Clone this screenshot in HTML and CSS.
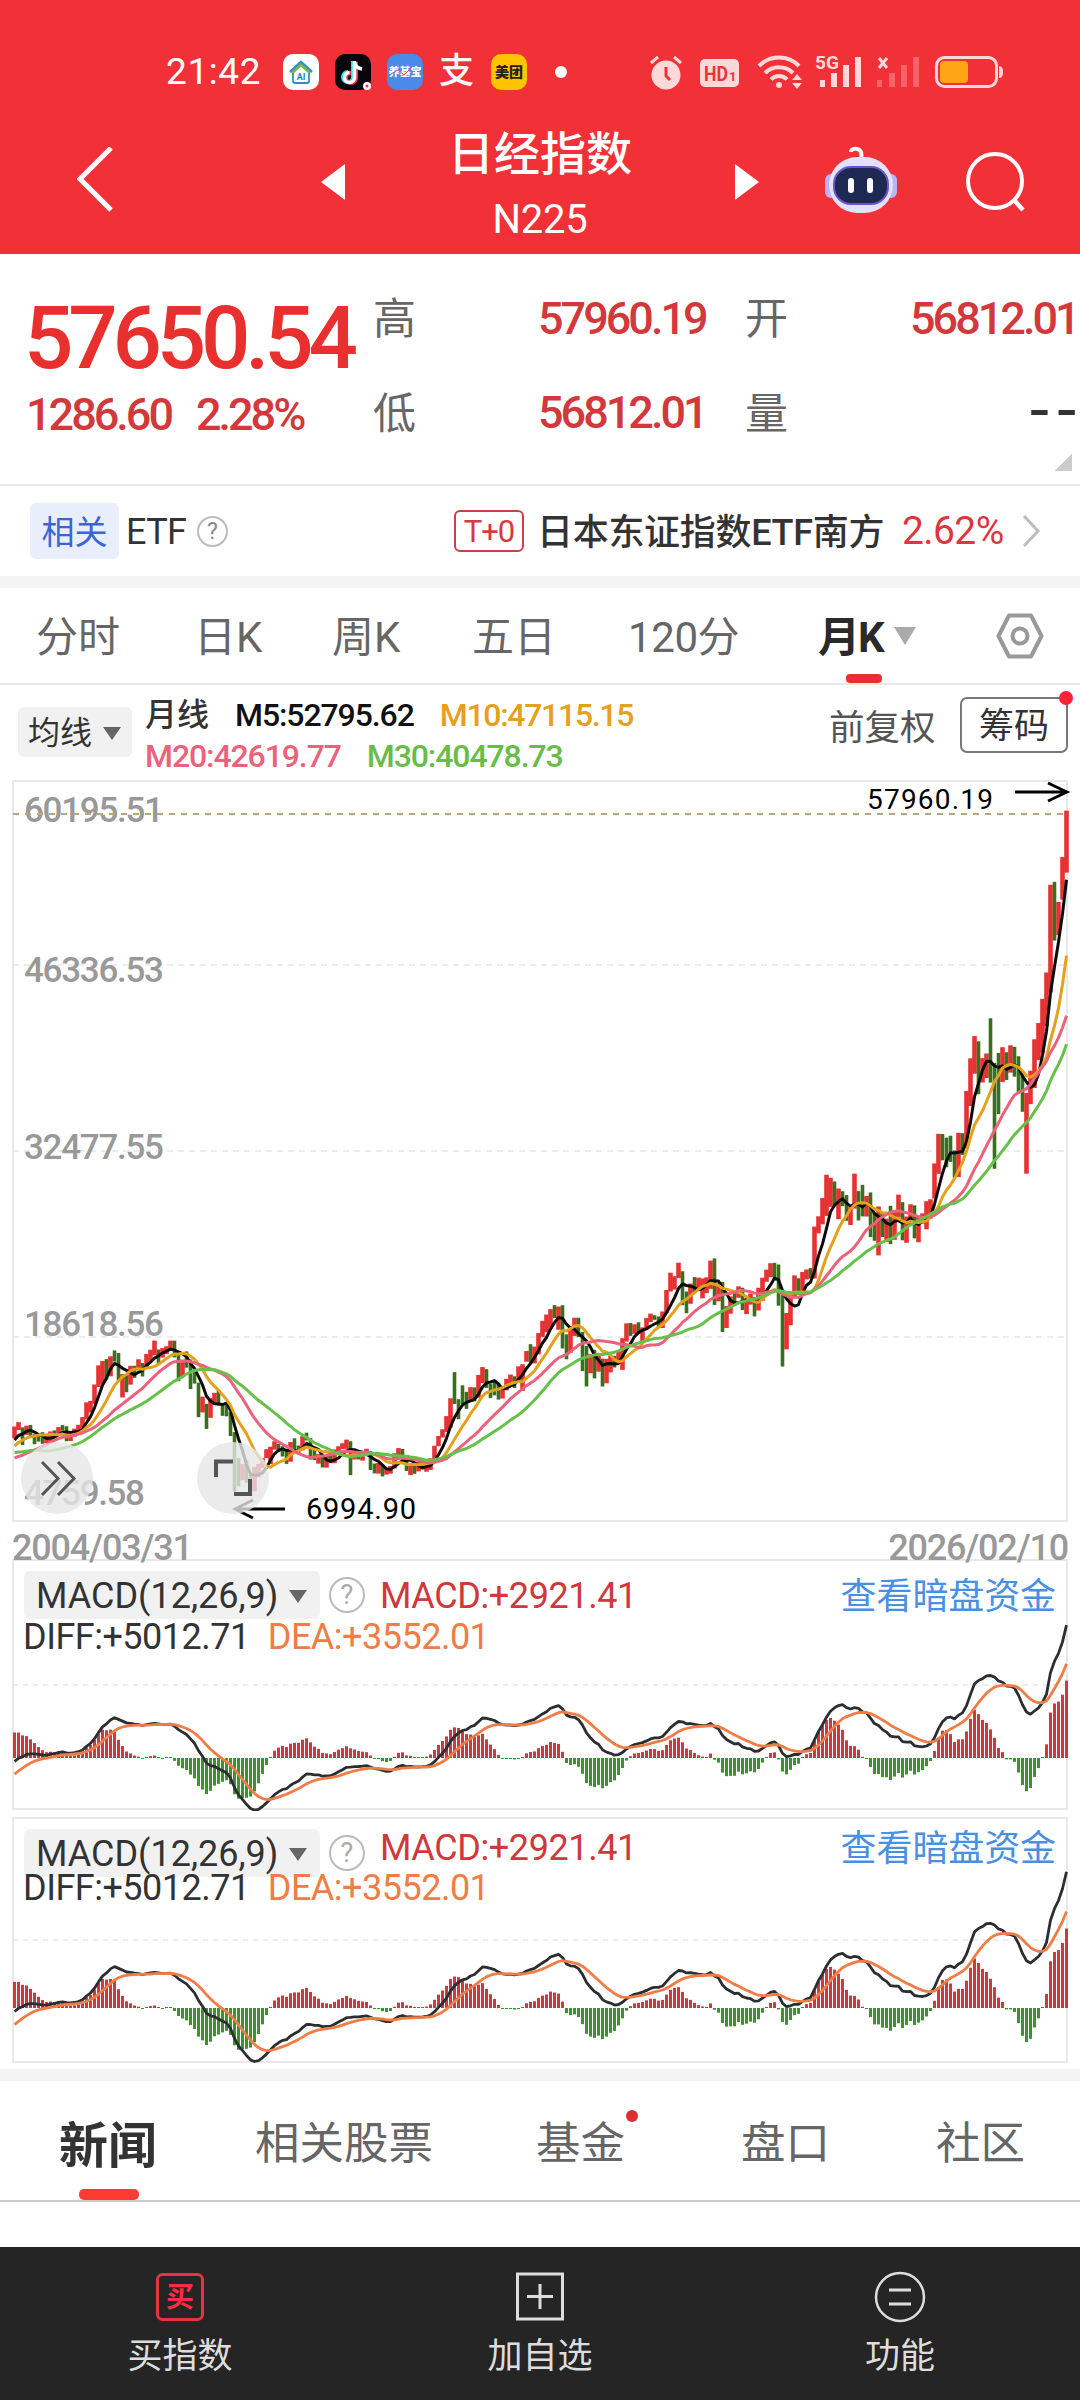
FILE: index.html
```html
<!DOCTYPE html>
<html lang="zh-CN">
<head>
    <meta charset="UTF-8">
    <meta name="viewport" content="width=device-width, initial-scale=1.0">
    <title>日经指数 N225</title>
    <link rel="stylesheet" href="styles.css">
</head>
<body>
    <header class="top">
        <div class="status">
            <span class="time">21:42</span>
            <svg class="app" viewBox="0 0 36 36"><rect width="36" height="36" rx="10" fill="#fff"/><path d="M7 18L18 8l11 10" fill="none" stroke="#2a8fd0" stroke-width="2.5"/><path d="M9 19l9-8 9 8" fill="none" stroke="#7ab648" stroke-width="2.5"/><path d="M10 19v8q0 2 2 2h12q2 0 2-2v-8" fill="none" stroke="#2a8fd0" stroke-width="1.8"/><text x="18" y="26" font-size="9" font-weight="700" text-anchor="middle" fill="#1d87b8">AI</text></svg>
            <svg class="app" viewBox="0 0 36 36"><rect width="36" height="36" rx="10" fill="#08060c"/><path d="M18 7v16a5 5 0 1 1-5-5" fill="none" stroke="#25e6e0" stroke-width="4"/><path d="M21 8v16a5 5 0 1 1-5-5" fill="none" stroke="#fb2c55" stroke-width="4"/><path d="M19.500 7v16.500a5 5 0 1 1-5-5M19.500 8q1 6 7.500 7" fill="none" stroke="#fff" stroke-width="3.600"/><circle cx="32" cy="32" r="4" fill="#fff"/><circle cx="32" cy="32" r="1.500" fill="#f13037"/></svg>
            <svg class="app" viewBox="0 0 36 36"><rect width="36" height="36" rx="10" fill="#4a8bea"/><text x="18" y="22" font-size="11" font-weight="900" text-anchor="middle" fill="#fff">养基宝</text><path d="M4 20l7-4 6 5 8-8" fill="none" stroke="#e34d63" stroke-width="1"/></svg>
            <span class="zhi">支</span>
            <svg class="app" viewBox="0 0 36 36"><rect width="36" height="36" rx="10" fill="#ffc300"/><text x="18" y="23" font-size="14" font-weight="900" text-anchor="middle" fill="#222">美团</text></svg>
            <i class="more"></i>
            <svg class="sys" viewBox="0 0 356 36" width="356" height="36">
                <g fill="#ffd9d9">
                    <circle cx="16" cy="21" r="14.500"/>
                    <path d="M1 9l7-6M31 9l-7-6" stroke="#ffd9d9" stroke-width="3"/>
                    <path d="M16 13v9l4 4" fill="none" stroke="#f13037" stroke-width="3"/>
                    <rect x="50" y="5" width="39" height="28" rx="5"/>
                    <text x="54" y="27" font-size="21" font-weight="700" textLength="24" lengthAdjust="spacingAndGlyphs" fill="#f13037">HD</text>
                    <text x="79" y="27" font-size="13" font-weight="700" fill="#f13037">1</text>
                    <path d="M109 12a28 28 0 0 1 40 0M115 19a20 20 0 0 1 28 0M121 25.500a11 11 0 0 1 16 0" fill="none" stroke="#ffd9d9" stroke-width="4"/>
                    <circle cx="129" cy="31" r="3"/>
                    <path d="M142 26l5-6 5 6zM142 29l5 6 5-6z"/>
                    <text x="165" y="15" font-size="19" font-weight="700" textLength="24" lengthAdjust="spacingAndGlyphs">5G</text>
                    <path d="M170 26h5v7h-5zM181 19h6v14h-6zM193 11h6v22h-6zM205 3h6v30h-6z"/>
                    <path d="M229 4l8 10m0-10l-8 10" stroke="#ffd9d9" stroke-width="3"/>
                    <path d="M227 26h5v7h-5zM239 19h6v14h-6zM251 11h6v22h-6zM263 3h6v30h-6z" opacity=".3"/>
                    <rect x="286.500" y="3.500" width="60" height="29" rx="8" fill="none" stroke="#ffd9d9" stroke-width="3"/>
                    <path d="M349 12q4 0 4 6t-4 6z"/>
                    <rect x="290" y="7" width="28" height="22" rx="4" fill="#ffa516"/>
                </g>
            </svg>
        </div>
        <nav class="titlebar">
            <svg class="back" width="36" height="66" viewBox="0 0 36 66"><path d="M34 1L3 32l31 31" fill="none" stroke="#fff" stroke-width="5"/></svg>
            <i class="prev"></i>
            <div class="title">
                <h1>日经指数</h1>
                <p>N225</p>
            </div>
            <i class="next"></i>
            <svg class="robot" width="74" height="68" viewBox="0 0 74 68">
                <path d="M37 13q2-9-4-10-6-1-6 3" fill="none" stroke="#fff" stroke-width="4"/>
                <rect x="1" y="28" width="12" height="24" rx="6" fill="#b9b3f0"/><rect x="61" y="28" width="12" height="24" rx="6" fill="#b9b3f0"/>
                <rect x="5" y="11" width="64" height="56" rx="28" fill="#e3e0fb"/>
                <rect x="10" y="21" width="54" height="37" rx="17" fill="#1d2950" stroke="#6a55c8" stroke-width="2"/>
                <rect x="24" y="32" width="6" height="15" rx="3" fill="#fff"/><rect x="43" y="32" width="6" height="15" rx="3" fill="#fff"/>
            </svg>
            <svg class="search" width="62" height="62" viewBox="0 0 62 62"><circle cx="31" cy="30" r="27" fill="none" stroke="#fff" stroke-width="4"/><path d="M50 49l9 10" stroke="#fff" stroke-width="4.500"/></svg>
        </nav>
    </header>

    <section class="quote">
        <div class="price">57650.54</div>
        <div class="change"><span>1286.60</span><span class="pct">2.28%</span></div>
        <span class="name high">高</span><b class="high">57960.19</b>
        <span class="name open">开</span><b class="open">56812.01</b>
        <span class="name low">低</span><b class="low">56812.01</b>
        <span class="name vol">量</span><b class="vol dark">--</b>
        <i class="corner"></i>
    </section>

    <section class="etf">
        <span class="tag">相关</span>
        <span class="etf-label">ETF</span>
        <span class="help small">?</span>
        <span class="t0">T+0</span>
        <span class="fund">日本东证指数ETF南方</span>
        <span class="rate">2.62%</span>
        <svg width="20" height="34" viewBox="0 0 20 34"><path d="M2 2l14 15L2 32" fill="none" stroke="#bbb" stroke-width="3"/></svg>
    </section>

    <nav class="periods">
        <span>分时</span>
        <span>日K</span>
        <span>周K</span>
        <span>五日</span>
        <span>120分</span>
        <span class="on">月K</span>
        <i class="tri big"></i>
        <svg width="48" height="48" viewBox="0 0 48 48"><path d="M13 3.500h22L45.500 24 35 44.500H13L2.500 24z" fill="none" stroke="#999" stroke-width="4" stroke-linejoin="round"/><circle cx="24" cy="24" r="7.500" fill="none" stroke="#999" stroke-width="4"/></svg>
    </nav>

    <section class="averages">
        <div class="select">均线<i class="tri"></i></div>
        <div class="ma">
            <p><span class="ml">月线</span><span class="m5">M5:52795.62</span><span class="m10">M10:47115.15</span></p>
            <p><span class="m20">M20:42619.77</span><span class="m30">M30:40478.73</span></p>
        </div>
        <span class="adjust">前复权</span>
        <span class="chips">筹码<i class="dot"></i></span>
    </section>

    <section class="kline">
        <svg id="kline" width="1080" height="742" viewBox="0 780 1080 742"></svg>
        <div class="dates"><span>2004/03/31</span><span>2026/02/10</span></div>
    </section>

    <section class="macd first">
        <svg id="macd1" width="1080" height="252" viewBox="0 0 1080 252"></svg>
        <div class="macd-head">
            <div class="select">MACD(12,26,9)<i class="tri"></i></div>
            <span class="help">?</span>
            <span class="macd-value">MACD:+2921.41</span>
            <a class="dark-pool">查看暗盘资金</a>
        </div>
        <div class="macd-line"><span>DIFF:+5012.71</span><span class="dea">DEA:+3552.01</span></div>
    </section>

    <section class="macd second">
        <svg id="macd2" width="1080" height="252" viewBox="0 0 1080 252"></svg>
        <div class="macd-head">
            <div class="select">MACD(12,26,9)<i class="tri"></i></div>
            <span class="help">?</span>
            <span class="macd-value">MACD:+2921.41</span>
            <a class="dark-pool">查看暗盘资金</a>
        </div>
        <div class="macd-line"><span>DIFF:+5012.71</span><span class="dea">DEA:+3552.01</span></div>
    </section>

    <nav class="news">
        <span class="on">新闻</span>
        <span>相关股票</span>
        <span>基金<i class="dot"></i></span>
        <span>盘口</span>
        <span>社区</span>
    </nav>

    <footer class="actions">
        <div>
            <svg width="52" height="52" viewBox="0 0 52 52"><rect x="3.500" y="3.500" width="45" height="45" rx="5" fill="none" stroke="#e8333f" stroke-width="3"/><text x="26" y="36" font-size="28" font-weight="700" text-anchor="middle" fill="#fb2c45">买</text></svg>
            <span>买指数</span>
        </div>
        <div>
            <svg width="52" height="52" viewBox="0 0 52 52"><rect x="3.500" y="3" width="45" height="45" fill="none" stroke="#ddd" stroke-width="3"/><path d="M13 25.500h26M26 13v25" stroke="#ddd" stroke-width="3"/></svg>
            <span>加自选</span>
        </div>
        <div>
            <svg width="52" height="52" viewBox="0 0 52 52"><circle cx="26" cy="26" r="24" fill="none" stroke="#ddd" stroke-width="2.500"/><path d="M15 19h22M15 33h22" stroke="#ddd" stroke-width="3"/></svg>
            <span>功能</span>
        </div>
    </footer>

    <script src="chart.js"></script>
</body>
</html>
```

FILE: styles.css
```css
* {
    box-sizing: border-box;
}

body {
    width: 1080px;
    height: 2400px;
    margin: 0;
    overflow: hidden;
    background-color: #fff;
    color: #333;
    font-family: Roboto, "Noto Sans CJK SC", sans-serif;
    line-height: 1;
    white-space: nowrap;
}

h1, p {
    margin: 0;
    font-weight: normal;
}

i {
    display: block;
}

/* header */
.top {
    height: 254px;
    background-color: #f13037;
    color: #fff;
}

.status {
    display: flex;
    align-items: center;
    height: 90px;
    padding: 53px 0 0 166px;
}

.time {
    width: 117px;
    font-size: 37px;
    letter-spacing: 0.6px;
}

.app {
    width: 36px;
    height: 36px;
    margin-right: 16px;
}

.zhi {
    width: 36px;
    margin-right: 16px;
    font-size: 35px;
    font-weight: 500;
}

.more {
    width: 12px;
    height: 12px;
    margin: 0 83px 0 12px;
    border-radius: 50%;
    background-color: #fff;
}

.titlebar {
    display: flex;
    align-items: flex-start;
    height: 164px;
    padding-left: 77px;
}

.back {
    margin-top: 57px;
}

.prev, .next {
    margin-top: 74px;
    border: 18px solid transparent;
}

.prev {
    margin-left: 208px;
    border-left-width: 0;
    border-right: 24px solid #fff;
}

.next {
    border-right-width: 0;
    border-left: 24px solid #fff;
}

.title {
    width: 390px;
    padding-top: 40px;
    text-align: center;
}

.title h1 {
    font-size: 46px;
    font-weight: 500;
    line-height: 48px;
}

.title p {
    margin-top: 21px;
    font-size: 40px;
    letter-spacing: -0.2px;
    line-height: 42px;
}

.robot {
    margin: 56px 0 0 65px;
}

.search {
    margin: 61px 0 0 66px;
}

/* quote */
.quote {
    display: grid;
    grid-template-columns: 349px 165px 207px 165px 168px;
    grid-template-rows: 86px 80px 33px;
    height: 232px;
    padding: 29px 0 0 24px;
    border-bottom: 2px solid #e8e8e8;
    align-items: center;
}

.price {
    grid-column: 1;
    grid-row: 1;
    padding-top: 24px;
    color: #e8302f;
    font-size: 87px;
    font-weight: 500;
    letter-spacing: -5.2px;
}

.change {
    grid-column: 1;
    grid-row: 2;
    display: flex;
    gap: 25px;
    padding: 10px 0 0 2px;
}

.change span, .quote b {
    color: #d2383c;
    font-size: 45px;
    font-weight: 500;
    letter-spacing: -3px;
}

.name {
    color: #666;
    font-size: 43px;
}

.name.high, .name.open {
    grid-row: 1;
    padding-bottom: 13px;
}

.name.low, .name.vol {
    grid-row: 2;
    padding-top: 10px;
}

.quote b.high, .quote b.open {
    grid-row: 1;
    padding-bottom: 16px;
}

.quote b.low {
    grid-row: 2;
    padding-top: 6px;
}

.quote b.dark {
    grid-row: 2;
    margin-right: -5px;
    color: #333;
    justify-self: end;
    font-family: "DejaVu Sans", sans-serif;
    font-size: 62px;
    font-weight: 400;
    letter-spacing: 5px;
}

.corner {
    grid-column: 5;
    grid-row: 3;
    align-self: start;
    justify-self: end;
    margin: 4px 6px 0 0;
    width: 18px;
    height: 18px;
    background: linear-gradient(135deg, transparent 50%, #ccc 50%);
}

/* related ETF */
.etf {
    display: flex;
    align-items: center;
    height: 102px;
    padding-left: 30px;
    border-bottom: 12px solid #f4f4f4;
}

.tag {
    width: 89px;
    height: 56px;
    border-radius: 6px;
    background-color: #e8eefc;
    color: #3c63d8;
    font-size: 33px;
    line-height: 59px;
    text-align: center;
}

.etf-label {
    width: 59px;
    margin: 2px 12px 0 7px;
    font-size: 36px;
    letter-spacing: -0.6px;
}

.help {
    width: 36px;
    height: 36px;
    border: 2px solid #bbb;
    border-radius: 50%;
    color: #aaa;
    font-size: 27px;
    line-height: 33px;
    text-align: center;
}

.help.small {
    width: 31px;
    height: 31px;
    color: #888;
    font-size: 23px;
    line-height: 28px;
}

.t0 {
    width: 70px;
    height: 42px;
    margin-left: 226px;
    border: 2px solid #cc4046;
    border-radius: 6px;
    color: #d8383e;
    font-size: 31px;
    line-height: 40px;
    letter-spacing: -1px;
    text-align: center;
}

.fund {
    width: 350px;
    margin: 4px 15px 0 13px;
    font-size: 36px;
    font-weight: 500;
    letter-spacing: -0.3px;
}

.rate {
    width: 120px;
    color: #e0353e;
    font-size: 39px;
    letter-spacing: -0.6px;
}

/* period tabs */
.periods {
    display: flex;
    align-items: center;
    height: 97px;
    padding-left: 36px;
    border-bottom: 2px solid #e8e8e8;
    color: #666;
    font-size: 42px;
}

.periods span { padding-top: 5px; }
.periods span:nth-child(1) { width: 158px; }
.periods span:nth-child(2) { width: 138px; }
.periods span:nth-child(3) { width: 140px; }
.periods span:nth-child(4) { width: 156px; }
.periods span:nth-child(5) { width: 190px; letter-spacing: -0.4px; }

.periods .on {
    position: relative;
    width: 76px;
    color: #2a2a2a;
    font-weight: 700;
    letter-spacing: -2px;
}

.periods .on::after {
    content: "";
    position: absolute;
    left: 28px;
    bottom: -24px;
    width: 36px;
    height: 9px;
    border-radius: 4px;
    background-color: #e8302f;
}

.tri {
    border: 9px solid transparent;
    border-top: 13px solid #666;
    border-bottom: 0;
}

.tri.big {
    margin-right: 80px;
    border-width: 18px 11px 0;
    border-top-color: #aaa;
}

/* moving averages */
.averages {
    display: flex;
    height: 95px;
    padding-left: 18px;
}

.select {
    display: flex;
    align-items: center;
    gap: 11px;
    border-radius: 6px;
    background-color: #f1f1f1;
}

.averages .select {
    width: 114px;
    height: 50px;
    margin: 22px 13px 0 0;
    padding: 2px 0 0 10px;
    font-size: 32px;
}

.ma {
    width: 684px;
    padding-top: 9px;
}

.ma p {
    display: flex;
    height: 41px;
    gap: 26px;
    font-size: 32px;
    font-weight: 500;
    letter-spacing: -1.1px;
    line-height: 42px;
}

.ma .ml { letter-spacing: 0; }
.m5 { color: #111; }
.m10 { color: #e5a01c; }
.m20 { color: #ec627c; }
.m30 { color: #67bd48; }

.ma .m10 { letter-spacing: -1.3px; }

.adjust {
    width: 131px;
    margin-top: 26px;
    color: #555;
    font-size: 35.5px;
}

.chips {
    position: relative;
    width: 108px;
    height: 56px;
    margin-top: 12px;
    border: 2px solid #777;
    border-radius: 7px;
    font-size: 35px;
    line-height: 56px;
    text-align: center;
}

.dot {
    position: absolute;
    width: 14px;
    height: 14px;
    border-radius: 50%;
    background-color: #fa2438;
}

.chips .dot {
    top: -8px;
    right: -7px;
}

/* charts */
.kline svg {
    display: block;
}

.kline text {
    font-size: 35px;
}

.dates {
    position: relative;
    z-index: 1;
    display: flex;
    justify-content: space-between;
    height: 37px;
    padding: 8px 12px 0 12px;
    color: #999;
    font-size: 36px;
    font-weight: 500;
    letter-spacing: -1.2px;
}

.macd {
    position: relative;
    height: 258px;
}

.macd.second {
    height: 264px;
    border-bottom: 12px solid #f4f4f4;
}

.macd svg {
    position: absolute;
    top: 0;
    left: 0;
}

.macd-head {
    position: relative;
    display: flex;
    align-items: center;
    height: 60px;
    padding: 12px 24px 0;
    font-size: 36px;
}

.macd-head .select {
    width: 296px;
    height: 48px;
    padding: 2px 0 0 12px;
}

.macd-head .help {
    margin: 0 15px 0 9px;
}

.macd-value {
    padding-top: 1px;
    color: #d0383c;
    letter-spacing: -0.4px;
}

.dark-pool {
    margin-left: auto;
    padding-top: 3px;
    color: #4a90e2;
    letter-spacing: -0.1px;
}

.second .macd-value, .second .dark-pool {
    position: relative;
    top: -6px;
}

.macd-line {
    position: relative;
    display: flex;
    gap: 18px;
    padding-left: 23px;
    font-size: 36px;
    letter-spacing: -0.5px;
}

.second .macd-line {
    margin-top: -7px;
}

.dea {
    color: #f07c46;
}

/* news tabs */
.news {
    display: flex;
    height: 121px;
    padding: 41px 0 0 59px;
    border-bottom: 2px solid #ccc;
    color: #666;
    font-size: 44.5px;
}

.news span {
    position: relative;
    height: 44px;
}

.news .on {
    color: #333;
    font-size: 49px;
    font-weight: 700;
}

.news .on::after {
    content: "";
    position: absolute;
    left: 20px;
    top: 67px;
    width: 60px;
    height: 11px;
    border-radius: 5px;
    background-color: #fe3b30;
}

.news span:nth-child(1) { width: 196px; }
.news span:nth-child(2) { width: 281px; }
.news span:nth-child(3) { width: 205px; }
.news span:nth-child(4) { width: 195px; }

.news .dot {
    left: 90px;
    top: -12px;
    width: 12px;
    height: 12px;
    background-color: #dc3031;
}

/* bottom bar */
.actions {
    display: grid;
    grid-template-columns: repeat(3, 1fr);
    height: 153px;
    margin-top: 45px;
    background-color: #252525;
    color: #ddd;
    font-size: 35px;
}

.actions div {
    display: flex;
    flex-direction: column;
    align-items: center;
    gap: 16px;
    padding-top: 24px;
}
```

FILE: chart.js
```js
// monthly closes 2000/01 - 2004/02, needed to warm up the averages
const before = [
    19539, 19959, 20337, 17973, 16332, 17411, 15727, 16861, 15747, 14539, 14648, 13785,
    13843, 12883, 12999, 13934, 13262, 12969, 11860, 10713, 9774, 10366, 10697, 10542,
    9997, 10587, 11024, 11492, 11763, 10621, 9877, 9619, 9383, 8640, 9215, 8578,
    8339, 8363, 7972, 7831, 8424, 9083, 9563, 10343, 10219, 10559, 10100, 10676,
    10783, 11041
];

// high, low, close per month from 2004/03
const months = [
    11869,10997,11715, 12195,11612,11761, 11803,10489,11236, 11929,11243,11858, 11988,11013,11325,
    11300,10546,11081, 11274,10745,10823, 11445,10576,10771, 11176,10637,10899, 11500,10755,11488,
    11580,11212,11387, 11828,11355,11740, 11975,11560,11668, 11892,10770,11008, 11381,10789,11276, 11711,11111,11584,
    12000,11540,11899, 12576,11614,12413, 13678,12408,13574, 13783,12915,13606, 15014,13575,14872, 16445,14828,16111,
    16777,15059,16649, 16916,15389,16205, 17125,15627,17059, 17563,16728,16906, 17375,15301,15467, 15796,14045,15505,
    15710,14437,15456, 16414,15003,16140, 16414,15513,16127, 16901,16075,16399, 16623,15615,16274, 17301,16185,17225,
    17617,16758,17383, 18300,17200,17604, 17638,16532,17287, 17743,17028,17400, 17880,17297,17875, 18297,17591,18138,
    18295,17042,17248, 17274,15262,16569, 16873,15610,16785, 17488,16274,16737, 16887,14669,15680, 16107,15087,15307,
    15156,12572,13592, 14105,12923,13603, 13570,11691,12525, 14003,12521,13849, 14392,13540,14338, 14601,13453,13481,
    13603,12671,13376, 13468,12631,13072, 12940,11160,11259, 11456,6995,8576, 9521,7406,8512, 9062,7849,8859,
    9325,7671,7994, 8257,7155,7568, 8843,7021,8109, 9068,8084,8828, 9522,8773,9522, 10170,9511,9958,
    10359,9050,10356, 10767,10142,10492, 10577,9971,10133, 10397,9628,10034, 10036,9076,9345, 10707,9233,10546,
    10982,10129,10198, 10449,9867,10126, 11147,10085,11089, 11408,10827,11057, 11000,9395,9768, 10251,9347,9382,
    9807,9091,9537, 9750,8807,8824, 9704,8796,9369, 9716,9123,9202, 10157,9123,9937, 10394,9918,10228,
    10620,10182,10237, 10891,10200,10624, 10768,8227,9755, 10017,9405,9849, 10017,9406,9693, 9849,9318,9816,
    10207,9824,9833, 10040,8619,8955, 9098,8359,8700, 9152,8343,8988, 9027,8135,8434, 8729,8272,8455,
    8911,8349,8802, 9866,8729,9723, 10255,9509,10083, 10190,9388,9520, 9520,8542,8542, 9044,8238,9006,
    9136,8328,8695, 9222,8513,8839, 9288,8646,8870, 9075,8488,8928, 9492,8619,9446, 10433,9376,10395,
    11164,10398,11138, 11662,11046,11559, 12650,11464,12397, 13983,11805,13860, 15942,13555,13774, 13916,12415,13677,
    14953,13562,13668, 14466,13188,13388, 14817,13748,14455, 14799,13748,14327, 15729,14026,15661, 16320,15112,16291,
    16164,14764,14914, 15094,13995,14841, 15312,14203,14827, 15164,13885,14304, 14744,13964,14632, 15442,14582,15162,
    15759,15101,15620, 15628,14753,15424, 16374,15356,16173, 16533,14529,16413, 17520,16720,17459, 18030,16672,17450,
    17850,16592,17674, 18865,17271,18797, 19778,18577,19206, 20252,18927,19520, 20655,19257,20563, 20952,19990,20235,
    20850,19115,20585, 20946,17714,18890, 18770,16901,17388, 19202,17389,19083, 20012,18641,19747, 20012,18562,19033,
    18951,16017,17518, 17905,14865,16026, 17291,15857,16758, 17613,15471,16666, 17251,15975,17234, 16945,14864,15575,
    16938,15106,16569, 17156,15921,16887, 17156,16285,16449, 17461,16554,17425, 18482,16111,18308, 19592,18227,19114,
    19615,18650,19041, 19519,18805,19118, 19668,18797,18909, 19289,18224,19196, 19998,19144,19650, 20318,19686,20033,
    20200,19856,19925, 20113,19280,19646, 20481,19239,20356, 22086,20363,22011, 23382,21972,22724, 23119,22119,22764,
    24129,22981,23098, 23492,20950,22068, 21971,20347,21454, 22568,21056,22467, 23050,21931,22201, 23011,22038,22304,
    22949,21462,22553, 23032,21851,22865, 24286,22172,24120, 24448,20971,21920, 22583,21243,22351, 22698,18948,20014,
    20892,19241,20773, 21610,20315,21385, 21860,20911,21205, 22362,21500,22258, 22258,20581,20601, 21497,20289,21275,
    21823,20993,21521, 21556,20110,20704, 22255,20554,21755, 23008,21276,22927, 23608,22705,23293, 24091,23044,23656,
    24115,22892,23205, 23995,20916,21142, 21719,16358,18917, 20365,17646,20193, 21955,19448,21877, 23178,21529,22288,
    22965,21710,21710, 23431,21710,23139, 23622,22878,23185, 23725,22948,22977, 26834,22948,26433, 27602,26327,27444,
    28979,27002,27663, 30714,27629,28966, 30485,28308,29178, 30208,28419,28812, 29685,27385,28860, 29480,28357,28791,
    29191,27272,27283, 28279,26954,28089, 30795,28179,29452, 29489,27293,28892, 29960,27594,27821, 29121,27588,28791,
    29388,26044,27001, 27880,25775,26526, 28338,24681,27821, 27943,26051,26847, 27430,25688,27279, 28389,25520,26393,
    28015,25841,27801, 29222,27530,28091, 28661,25805,25937, 27587,25621,27587, 28502,27032,27968, 28423,25953,26094,
    27567,25661,27327, 27821,27046,27445, 28734,26632,28041, 28879,27427,28856, 31560,28931,30887, 33772,30785,33189,
    33762,31791,33172, 33488,31275,32619, 33634,31674,31857, 32533,30487,30858, 33853,30538,33486, 33824,32205,33464,
    36984,32693,36286, 39426,35854,39166, 41087,38271,40369, 40697,36733,38405, 39437,37617,38487, 39788,37950,39583,
    42426,37611,39101, 39080,31156,38647, 39829,35247,37919, 40257,37651,39081, 39884,37801,38208, 40398,38355,39894,
    40288,38055,39572, 39581,36840,37155, 38220,35426,35617, 36840,30792,36045, 38494,36000,37965, 40852,37200,40487,
    42065,39288,41069, 43876,39850,42718, 45852,41835,44932, 52411,44357,52411, 52636,48235,50253, 51127,48643,50339,
    54487,51300,53322, 57960,53322,57650.54
];

const candles = [];
for (let i = 0; i < months.length; i += 3) {
    candles.push({ high: months[i], low: months[i + 1], close: months[i + 2] });
}
const closes = before.concat(candles.map(c => c.close));
const skip = before.length;

function x(i) {
    return 14.5 + i * 4;
}

function points(values, y) {
    return values.map((v, i) => x(i) + "," + y(v).toFixed(1)).join(" ");
}

function average(n) {
    return candles.map((c, i) => {
        const end = skip + i + 1;
        return closes.slice(end - n, end).reduce((a, b) => a + b) / n;
    });
}

function ema(values, n) {
    let last = values[0];
    return values.map(v => last = last + (v - last) * 2 / (n + 1));
}

function line(values, y, color, width) {
    return `<polyline points="${points(values, y)}" fill="none" stroke="${color}" stroke-width="${width}" stroke-linejoin="round"/>`;
}

function drawKline() {
    const y = v => 780.8 + (60195.51 - v) / 74.84;
    let out = '<rect x="13" y="781" width="1054" height="740" fill="none" stroke="#e8e8e8" stroke-width="2"/>';
    for (const g of [965, 1151, 1337]) {
        out += `<path d="M13 ${g}H1067" stroke="#e6e6e6" stroke-width="1.500" stroke-dasharray="6 5"/>`;
    }

    // price scale
    const scale = [["60195.51", 822], ["46336.53", 982], ["32477.55", 1159], ["18618.56", 1336], ["4759.58", 1505]];
    for (const [label, base] of scale) {
        const w = label.length === 8 ? 140 : 121;
        out += `<text x="24" y="${base}" textLength="${w}" font-weight="500" fill="#999">${label}</text>`;
    }
    out += '<path d="M13 814H1067" stroke="#b9a57c" stroke-width="2" stroke-dasharray="6 6"/>';

    candles.forEach((c, i) => {
        const up = c.close >= closes[skip + i - 1];
        const w = up ? 4.6 : 3.6;
        out += `<rect x="${x(i) - w / 2}" y="${y(c.high)}" width="${w}" height="${y(c.low) - y(c.high)}" fill="${up ? "#e53232" : "#38701f"}"/>`;
    });
    out += line(average(5), y, "#0c0c0c", 3);
    out += line(average(10), y, "#e5a01c", 3);
    out += line(average(20), y, "#ec627c", 3);
    out += line(average(30), y, "#67c04a", 3);

    // highest and lowest marks
    out += '<text x="867" y="809" style="font-size:28px" textLength="126" fill="#000">57960.19</text>';
    out += '<path d="M1015 792h51m-18-9l19 9-19 9" fill="none" stroke="#000" stroke-width="2.800"/>';
    out += '<text x="306" y="1519" style="font-size:29px" textLength="110" fill="#000">6994.90</text>';
    out += '<path d="M285 1509h-50m18-9l-18 9 18 9" fill="none" stroke="#000" stroke-width="2.800"/>';

    // floating buttons
    out += '<g fill="none" stroke="#555" stroke-width="4">';
    out += '<circle cx="57" cy="1478" r="36" fill="#e6e6e6" fill-opacity=".8" stroke="none"/>';
    out += '<circle cx="233" cy="1478" r="36" fill="#e6e6e6" fill-opacity=".8" stroke="none"/>';
    out += '<path d="M42 1462l16 16.500-16 16.500M58 1462l16 16.500-16 16.500" stroke-width="3"/>';
    out += '<path d="M216 1477v-15.500h17M250 1479v15h-16"/></g>';
    document.getElementById("kline").innerHTML = out;
}

function drawMacd(id, bottom, zero, grid, unit) {
    const fast = ema(closes, 12);
    const slow = ema(closes, 26);
    const diff = fast.map((v, i) => v - slow[i]);
    const dea = ema(diff, 9);
    const y = v => zero - v * unit;
    let out = `<rect x="13" y="1" width="1054" height="${bottom - 1}" fill="none" stroke="#e8e8e8" stroke-width="2"/>`;
    out += `<path d="M13 ${grid}H1067" stroke="#e6e6e6" stroke-width="1.500" stroke-dasharray="5 5"/>`;
    candles.forEach((c, i) => {
        const bar = 2 * (diff[skip + i] - dea[skip + i]);
        const h = Math.max(1, Math.abs(bar) * unit);
        out += `<rect x="${x(i) - 1.5}" y="${bar > 0 ? zero - h : zero}" width="3" height="${h}" fill="${bar > 0 ? "#cb3a3d" : "#3d932b"}"/>`;
    });
    out += line(diff.slice(skip), y, "#2b2e30", 2.8);
    out += line(dea.slice(skip), y, "#f07c46", 2.8);
    document.getElementById(id).innerHTML = out;
}

drawKline();
drawMacd("macd1", 250, 199, 126, 0.0265);
drawMacd("macd2", 245, 191, 123, 0.0272);
```
